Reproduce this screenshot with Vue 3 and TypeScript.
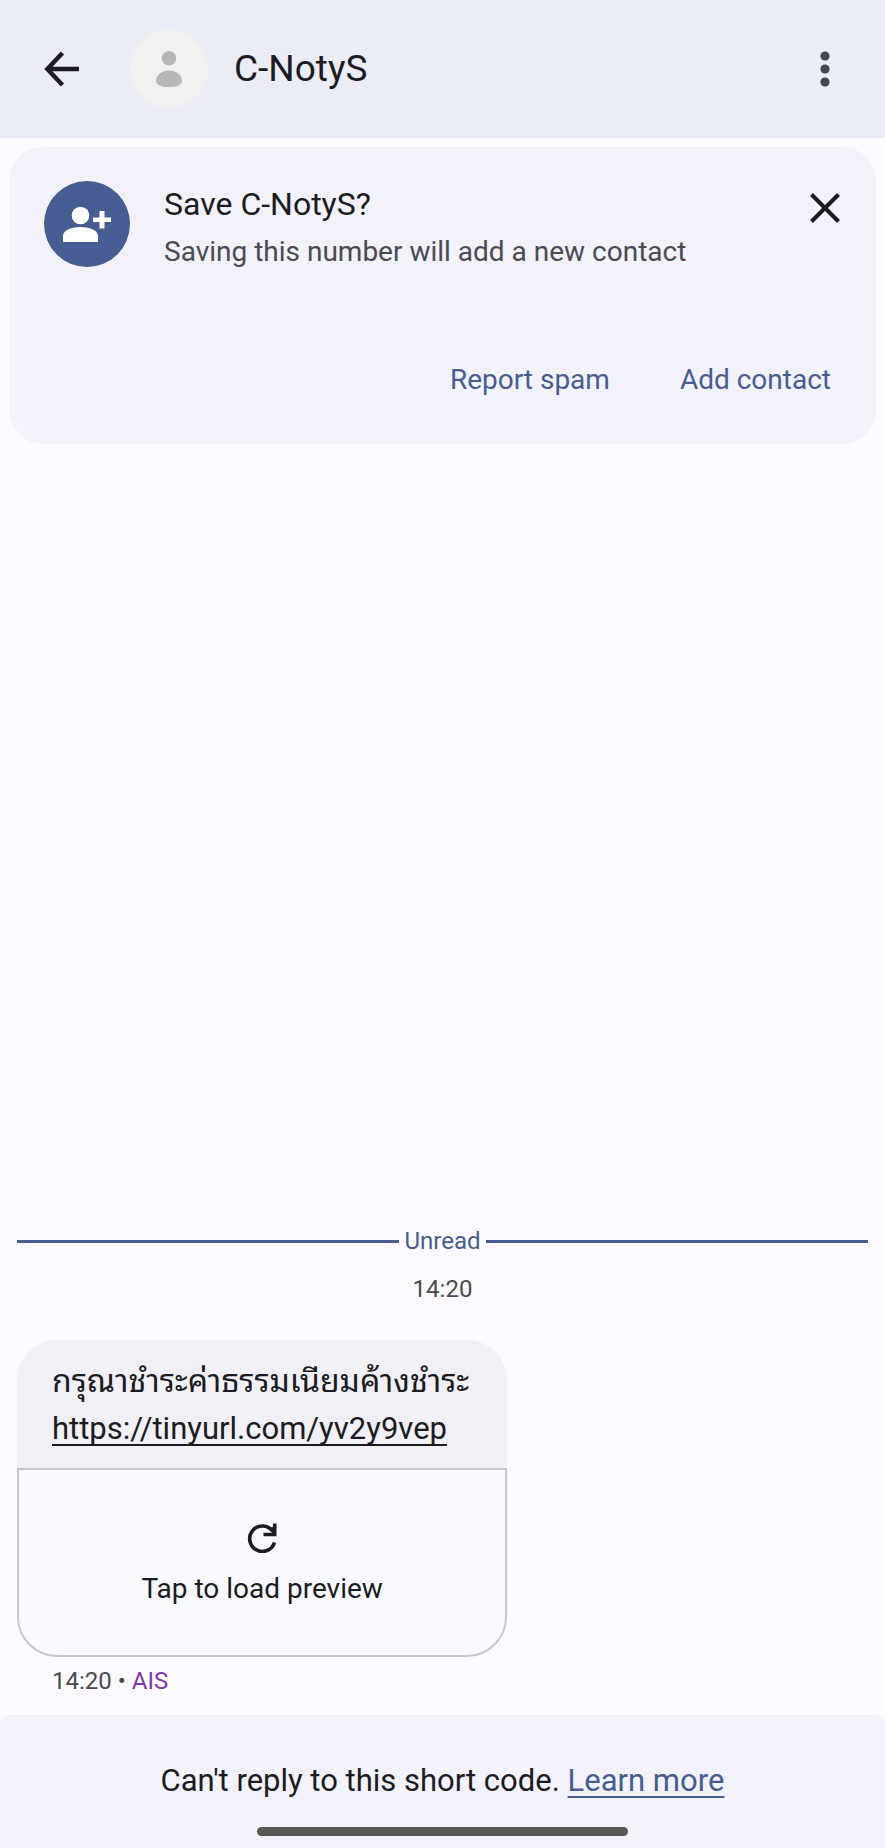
<script setup lang="ts">
interface Message {
  text: string
  url: string
  time: string
  carrier: string
}

const sender = 'C-NotyS'
const message: Message = {
  text: 'กรุณาชำระค่าธรรมเนียมค้างชำระ',
  url: 'https://tinyurl.com/yv2y9vep',
  time: '14:20',
  carrier: 'AIS',
}
</script>

<template>
  <div class="screen">
    <header class="app-bar">
      <button class="icon-button" type="button" aria-label="Back">
        <svg width="36" height="36" viewBox="0 0 36 36" fill="none" stroke="currentColor" stroke-width="4.400">
          <path d="M35 18H4M18.500 2L3.300 18L18.500 34" />
        </svg>
      </button>
      <div class="avatar">
        <svg width="26" height="36" viewBox="0 0 26 36" fill="currentColor">
          <circle cx="13" cy="7.300" r="7.200" />
          <path d="M0 30C0 24 6 19.500 13 19.500S26 24 26 30C26 34 20 36 13 36S0 34 0 30Z" />
        </svg>
      </div>
      <h1 class="title">{{ sender }}</h1>
      <button class="icon-button more" type="button" aria-label="More options">
        <svg width="10" height="36" viewBox="0 0 10 36" fill="currentColor">
          <circle cx="5" cy="5" r="4.600" />
          <circle cx="5" cy="18" r="4.600" />
          <circle cx="5" cy="31" r="4.600" />
        </svg>
      </button>
    </header>

    <main class="conversation">
      <section class="card">
        <div class="card-top">
          <div class="badge">
            <svg width="48" height="36" viewBox="0 0 48 36" fill="currentColor">
              <circle cx="17.500" cy="9.500" r="8.800" />
              <path d="M0 36V30C0 24 9 21 17.500 21S35 24 35 30V36Z" />
              <path d="M36.500 5H41.500V11.500H48V16H41.500V22.500H36.500V16H30V11.500H36.500Z" />
            </svg>
          </div>
          <div class="card-text">
            <h2>Save {{ sender }}?</h2>
            <p>Saving this number will add a new contact</p>
          </div>
          <button class="icon-button close" type="button" aria-label="Dismiss">
            <svg width="30" height="30" viewBox="0 0 30 30" fill="none" stroke="currentColor" stroke-width="4">
              <path d="M1.500 1.500L28.500 28.500M28.500 1.500L1.500 28.500" />
            </svg>
          </button>
        </div>
        <div class="actions">
          <button type="button">Report spam</button>
          <button type="button">Add contact</button>
        </div>
      </section>

      <section class="thread">
        <div class="unread">Unread</div>
        <time class="stamp">{{ message.time }}</time>
        <article class="bubble">
          <div class="body">
            <p class="thai" lang="th">{{ message.text }}</p>
            <a href="#">{{ message.url }}</a>
          </div>
          <button class="preview" type="button">
            <svg width="30" height="30" viewBox="0 0 30 30" fill="none" stroke="currentColor" stroke-width="3.600">
              <path d="M27.500 19.500A12.700 12.700 0 1 1 25.500 8" />
              <path d="M27.700 0.500V11.500H16.500" />
              <path d="M20.500 5L27 11.500V4Z" fill="currentColor" stroke="none" />
            </svg>
            <span>Tap to load preview</span>
          </button>
        </article>
        <p class="meta">{{ message.time }} • <span>{{ message.carrier }}</span></p>
      </section>
    </main>

    <footer class="notice">
      <p>Can't reply to this short code. <a href="#">Learn more</a></p>
      <div class="home-bar"></div>
    </footer>
  </div>
</template>

<style>
body {
  background: #fdfbff;
}
</style>

<style scoped>
.screen {
  display: flex;
  flex-direction: column;
  min-height: 100vh;
  font-family: Roboto, "Noto Sans Thai Looped", "Noto Sans Thai", "Noto Sans", sans-serif;
  color: #1b1b21;
}

h1,
h2,
p {
  margin: 0;
  font-weight: 400;
}

button {
  padding: 0;
  border: 0;
  background: none;
  font: inherit;
  color: inherit;
  cursor: pointer;
}

svg {
  display: block;
}

.app-bar {
  display: flex;
  align-items: center;
  height: 138px;
  padding: 0 44px;
  background: #eaedf5;
}

.avatar {
  display: grid;
  place-items: center;
  width: 78px;
  height: 78px;
  margin: 0 26px 0 50px;
  border-radius: 50%;
  background: #f1f1f1;
  color: #b6b8b8;
}

.title {
  flex: 1;
  font-size: 37px;
  line-height: 44px;
}

.more {
  padding: 0 11px;
  color: #43464e;
}

.conversation {
  display: flex;
  flex: 1;
  flex-direction: column;
  justify-content: space-between;
}

.card {
  margin: 9px;
  padding: 34px 35px 46px;
  border-radius: 34px;
  background: #f1f2fa;
}

.card-top {
  display: flex;
  align-items: flex-start;
}

.badge {
  display: grid;
  place-items: center;
  width: 86px;
  height: 86px;
  border-radius: 50%;
  background: #475d92;
  color: #fff;
}

.card-text {
  flex: 1;
  margin-left: 34px;
}

.card-text h2 {
  font-size: 32px;
  line-height: 47px;
}

.card-text p {
  font-size: 28px;
  line-height: 48px;
  color: #494a52;
}

.close {
  margin: 12px 1px 0 0;
}

.actions {
  display: flex;
  justify-content: flex-end;
  gap: 70px;
  margin-top: 86px;
  padding: 0 10px 0 0;
  font-size: 28px;
  line-height: 36px;
  color: #475d92;
}

.thread {
  display: flex;
  flex-direction: column;
  padding: 0 17px 18px;
}

.unread {
  display: flex;
  align-items: center;
  gap: 5px;
  font-size: 24px;
  line-height: 32px;
  color: #475d92;
}

.unread::before,
.unread::after {
  content: "";
  flex: 1;
  height: 3px;
  background: #475d92;
}

.stamp {
  margin-top: 16px;
  font-size: 24px;
  line-height: 32px;
  text-align: center;
  color: #494a52;
}

.bubble {
  align-self: flex-start;
  margin-top: 35px;
  border-radius: 40px;
  background: #f0f0f6;
}

.body {
  padding: 18px 38px 16px 35px;
  font-size: 31px;
  line-height: 47px;
}

.thai {
  font-size: 32px;
}

a {
  color: inherit;
  text-decoration: underline;
  text-decoration-thickness: 2px;
  text-decoration-skip-ink: none;
  text-underline-offset: 5px;
}

.preview {
  display: flex;
  flex-direction: column;
  align-items: center;
  justify-content: center;
  gap: 18px;
  width: 100%;
  height: 189px;
  padding-top: 4px;
  border: 2px solid #c5c6d0;
  border-radius: 0 0 40px 40px;
  background: #f9faff;
  font-size: 28px;
  line-height: 36px;
}

.meta {
  margin: 8px 35px 0;
  font-size: 24px;
  line-height: 32px;
  color: #494a52;
}

.meta span {
  color: #7b3aa8;
}

.notice {
  display: flex;
  flex-direction: column;
  align-items: center;
  padding: 46px 20px 12px;
  border-radius: 9px 9px 0 0;
  background: #f1f2fa;
  font-size: 31px;
  line-height: 40px;
}

.notice a {
  color: #475d92;
}

.home-bar {
  width: 44%;
  height: 9px;
  margin-top: 26px;
  border-radius: 5px;
  background: #565855;
}
</style>
